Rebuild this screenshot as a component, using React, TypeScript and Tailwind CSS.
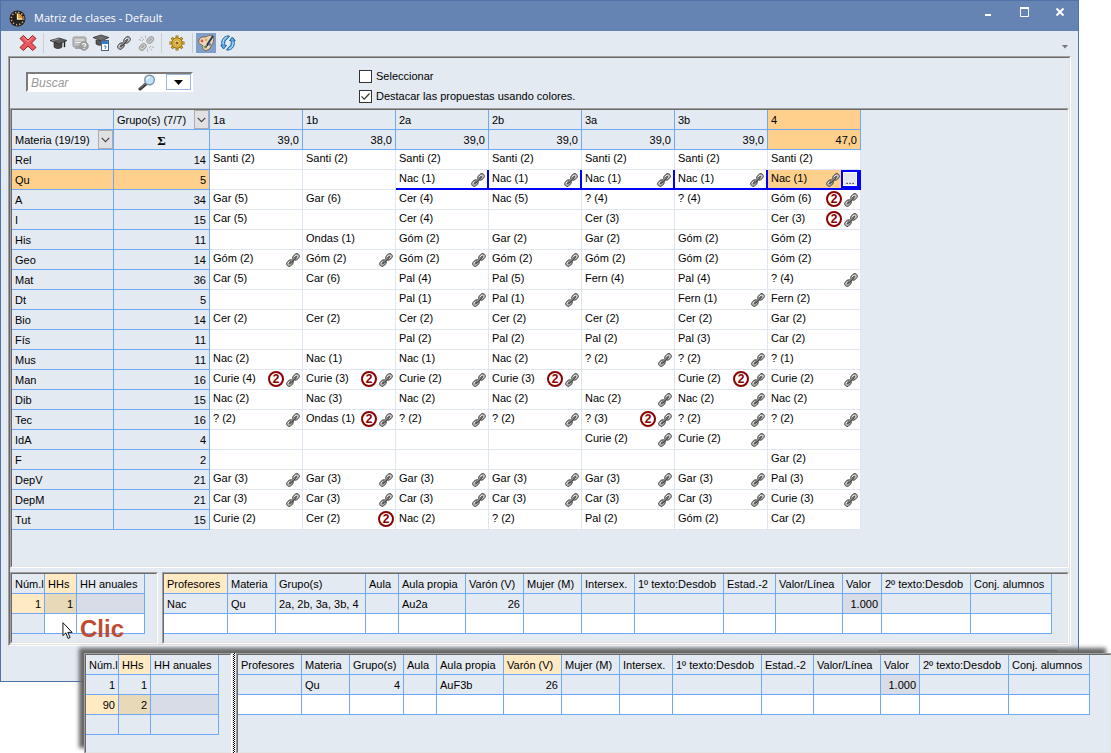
import type { ReactNode } from 'react';

import clsx from 'clsx';

const GROUPS = [
    { name: '1a', total: '39,0' },
    { name: '1b', total: '38,0' },
    { name: '2a', total: '39,0' },
    { name: '2b', total: '39,0' },
    { name: '3a', total: '39,0' },
    { name: '3b', total: '39,0' },
    { name: '4', total: '47,0' },
];

// after the bar: b = second coupling badge, l = link icon
const SUBJECTS: [string, number, string[]][] = [
    ['Rel', 14, ['Santi (2)', 'Santi (2)', 'Santi (2)', 'Santi (2)', 'Santi (2)', 'Santi (2)', 'Santi (2)']],
    ['Qu', 5, ['', '', 'Nac (1)|l', 'Nac (1)|l', 'Nac (1)|l', 'Nac (1)|l', 'Nac (1)|l']],
    ['A', 34, ['Gar (5)', 'Gar (6)', 'Cer (4)', 'Nac (5)', '? (4)', '? (4)', 'Góm (6)|bl']],
    ['I', 15, ['Car (5)', '', 'Cer (4)', '', 'Cer (3)', '', 'Cer (3)|bl']],
    ['His', 11, ['', 'Ondas (1)', 'Góm (2)', 'Gar (2)', 'Gar (2)', 'Góm (2)', 'Góm (2)']],
    ['Geo', 14, ['Góm (2)|l', 'Góm (2)|l', 'Góm (2)|l', 'Góm (2)|l', 'Góm (2)', 'Góm (2)', 'Góm (2)']],
    ['Mat', 36, ['Car (5)', 'Car (6)', 'Pal (4)', 'Pal (5)', 'Fern (4)', 'Pal (4)', '? (4)|l']],
    ['Dt', 5, ['', '', 'Pal (1)|l', 'Pal (1)|l', '', 'Fern (1)|l', 'Fern (2)']],
    ['Bio', 14, ['Cer (2)', 'Cer (2)', 'Cer (2)', 'Cer (2)', 'Cer (2)', 'Cer (2)', 'Gar (2)']],
    ['Fís', 11, ['', '', 'Pal (2)', 'Pal (2)', 'Pal (2)', 'Pal (3)', 'Car (2)']],
    ['Mus', 11, ['Nac (2)', 'Nac (1)', 'Nac (1)', 'Nac (2)', '? (2)|l', '? (2)|l', '? (1)']],
    ['Man', 16, ['Curie (4)|bl', 'Curie (3)|bl', 'Curie (2)|l', 'Curie (3)|bl', '', 'Curie (2)|bl', 'Curie (2)|l']],
    ['Dib', 15, ['Nac (2)', 'Nac (3)', 'Nac (2)', 'Nac (2)', 'Nac (2)|l', 'Nac (2)|l', 'Nac (2)']],
    ['Tec', 16, ['? (2)|l', 'Ondas (1)|bl', '? (2)|l', '? (2)|l', '? (3)|bl', '? (2)|l', '? (2)|l']],
    ['IdA', 4, ['', '', '', '', 'Curie (2)|l', 'Curie (2)|l', '']],
    ['F', 2, ['', '', '', '', '', '', 'Gar (2)']],
    ['DepV', 21, ['Gar (3)|l', 'Gar (3)|l', 'Gar (3)|l', 'Gar (3)|l', 'Gar (3)|l', 'Gar (3)|l', 'Pal (3)|l']],
    ['DepM', 21, ['Car (3)|l', 'Car (3)|l', 'Car (3)|l', 'Car (3)|l', 'Car (3)|l', 'Car (3)|l', 'Curie (3)|l']],
    ['Tut', 15, ['Curie (2)', 'Cer (2)|b', 'Nac (2)', '? (2)', 'Pal (2)', 'Góm (2)', 'Car (2)']],
];

const CELL = 'h-5 border-r border-b border-[#6ea8f7] font-normal whitespace-nowrap overflow-hidden';
const HEAD = clsx(CELL, 'p-0 pt-[2px] px-[3px] leading-[17px]');
const FILTER_HEAD = clsx(CELL, 'p-0 pl-[3px]');

type Column = { name: string; width: string; active?: boolean };
type Cell = { text?: string; right?: boolean; bg?: string };

const HOURS_COLUMNS: Column[] = [
    { name: 'Núm.l', width: 'w-[33px]' },
    { name: 'HHs', width: 'w-8', active: true },
    { name: 'HH anuales', width: 'w-[68px]' },
];

const lessonColumns = (groupWidth: string, active: string): Column[] =>
    [
        { name: 'Profesores', width: 'w-16' },
        { name: 'Materia', width: 'w-12' },
        { name: 'Grupo(s)', width: groupWidth },
        { name: 'Aula', width: 'w-[33px]' },
        { name: 'Aula propia', width: 'w-[67px]' },
        { name: 'Varón (V)', width: 'w-[58px]' },
        { name: 'Mujer (M)', width: 'w-[58px]' },
        { name: 'Intersex.', width: 'w-[53px]' },
        { name: '1º texto:Desdob', width: 'w-[89px]' },
        { name: 'Estad.-2', width: 'w-[52px]' },
        { name: 'Valor/Línea', width: 'w-[67px]' },
        { name: 'Valor', width: 'w-[39px]' },
        { name: '2º texto:Desdob', width: 'w-[89px]' },
        { name: 'Conj. alumnos', width: 'w-[81px]' },
    ].map(column => ({ ...column, active: column.name === active }));

const lessonRow = (teacher: string, groups: Cell, room: string): Cell[] => [
    { text: teacher },
    { text: 'Qu' },
    groups,
    {},
    { text: room },
    { text: '26', right: true },
    {},
    {},
    {},
    {},
    {},
    { text: '1.000', right: true, bg: 'bg-[#d7dce6]' },
    {},
    {},
];

const EMPTY_LESSON: Cell[] = Array.from({ length: 14 }, () => ({ bg: 'bg-white' }));

const ClockIcon = () => (
    <svg width="17" height="17" viewBox="0 0 17 17" aria-hidden="true">
        <circle cx="8.500" cy="8.500" r="8" fill="#24201e" />
        <circle cx="8.500" cy="8.500" r="6.200" fill="none" stroke="#d8b07a" strokeWidth="1.500" strokeDasharray="1.300 1.950" />
        <path d="M8.500 3.500A5 5 0 0 1 13.500 8.500H8.500Z" fill="#e8952c" />
        <path d="M8.500 3.500v5.500h5" fill="none" stroke="#fff0b0" strokeWidth="1.300" />
    </svg>
);

const DeleteIcon = () => (
    <svg width="18" height="18" viewBox="0 0 18 18" aria-hidden="true">
        <path d="M4.500 1.500 9 6l4.500-4.500L17 4.500 12.500 9l4.500 4.500-3.500 3L9 12l-4.500 4.500L1 13.500 5.500 9 1 4.500Z" fill="#e8585c" stroke="#a81c24" strokeLinejoin="round" />
        <path d="M4.500 3.200 9 7.700l4.500-4.500" fill="none" stroke="#ff9a98" />
    </svg>
);

const CapIcon = () => (
    <svg width="17" height="16" viewBox="0 0 17 16" aria-hidden="true">
        <path d="M4 7v5c2 2 6 2 8 0V7" fill="#4a4a4a" stroke="#222" strokeWidth=".6" />
        <path d="M0 5.500 9 3l8 2.500L9 9Z" fill="#5d5d5d" stroke="#262626" strokeWidth=".7" />
        <path d="m2 5.600 7-1.800" stroke="#aaa" strokeWidth=".8" />
        <path d="M14.500 6.200v6" stroke="#222" strokeWidth="1.400" />
    </svg>
);

const LessonQueryIcon = () => (
    <svg width="17" height="16" viewBox="0 0 17 16" aria-hidden="true">
        <rect x="1" y="2" width="13" height="10" rx="1.500" fill="#bcbcbc" stroke="#999" />
        <path d="M3 5h9M3 7.500h6" stroke="#eee" />
        <rect x="3" y="11" width="7" height="3" fill="#a4a4a4" />
        <circle cx="12" cy="11" r="4.300" fill="#a2a2a2" stroke="#8a8a8a" strokeWidth=".7" />
        <path d="M10.600 10c0-2 3-2 3 0 0 1-1.400 1-1.400 2m0 1v1" fill="none" stroke="#fff" strokeWidth="1.100" />
    </svg>
);

const CapCalendarIcon = () => (
    <svg width="18" height="18" viewBox="0 0 18 18" aria-hidden="true">
        <path d="M3 6v4c2 1.500 4 1.500 6 1V6" fill="#555" stroke="#222" strokeWidth=".6" />
        <path d="M0 3.500 8 1l8 2.500L8 7Z" fill="#6c6c6c" stroke="#262626" strokeWidth=".7" />
        <rect x="8.500" y="6.500" width="7" height="10" fill="#fff" stroke="#56606c" />
        <path d="M9 7h6v3H9z" fill="#2f80d0" />
        <path d="M11 12h2v1l-1 2" fill="none" stroke="#2f80d0" />
    </svg>
);

const LinkIcon = () => (
    <svg width="14" height="14" viewBox="0 0 14 14" aria-hidden="true" className="shrink-0">
        <g transform="rotate(-45 7 7)">
            <rect x="-.8" y="4.500" width="7" height="5" rx="2.500" fill="#b4b4b4" stroke="#565656" />
            <rect x="7.800" y="4.500" width="7" height="5" rx="2.500" fill="#cacaca" stroke="#565656" />
            <path d="M2.500 7h3M8.500 7h3" stroke="#555" strokeWidth="2" strokeLinecap="round" />
            <path d="M4 7h6" stroke="#484848" strokeWidth="2.600" />
            <path d="M4 6.600h6" stroke="#c4c4c4" strokeWidth=".9" />
            <path d="M.8 5.700h2.600M9.600 5.700h3" stroke="#f4f4f4" strokeWidth=".9" />
        </g>
    </svg>
);

const UnlinkIcon = () => (
    <svg width="17" height="17" viewBox="0 0 17 17" aria-hidden="true">
        <g fill="#ccc" stroke="#9c9c9c">
            <rect x="1" y="9.500" width="7.500" height="5" rx="2.500" transform="rotate(-45 4.750 12)" />
            <rect x="8.500" y="2.500" width="7.500" height="5" rx="2.500" transform="rotate(-45 12.250 5)" />
        </g>
        <path d="M3.500 12.800 6 10.500M11 6l2.500-2.300" stroke="#999" strokeWidth="1.200" />
        <path d="M1 4.500 5 6M3 1.500 6 5M7.500.5V4M16 12.500 12 11M14 15.500 11 12M9.500 16.500V13" stroke="#aaa" strokeDasharray="2 1" />
    </svg>
);

const GearIcon = () => (
    <svg width="16" height="16" viewBox="0 0 16 16" aria-hidden="true">
        <path d="M8 .5v15M.5 8h15M2.700 2.700l10.600 10.600M13.300 2.700 2.700 13.300" stroke="#8a6412" strokeWidth="2.800" />
        <path d="M8 1v14M1 8h14M3 3l10 10M13 3 3 13" stroke="#e0ae30" strokeWidth="1.400" />
        <circle cx="8" cy="8" r="5.200" fill="#e8bd48" stroke="#94700f" />
        <circle cx="8" cy="8" r="3.200" fill="#f7dc82" stroke="#b08420" strokeWidth=".8" />
        <circle cx="8" cy="8" r="1.600" fill="#8a6412" />
    </svg>
);

const PaletteIcon = () => (
    <svg width="18" height="18" viewBox="0 0 18 18" aria-hidden="true">
        <path d="M2 6C3 3 6 3 8 3s5-3 8-1c2 3 0 8-3 12-2 3-6 3-7 1s1-3-1-4-4-2-3-5Z" fill="#ecd8b8" stroke="#7d6248" />
        <circle cx="5" cy="7" r="1.400" fill="#c7594e" />
        <circle cx="9" cy="5.800" r="1.400" fill="#dfa95a" />
        <circle cx="8.500" cy="13" r="1.400" fill="#5a9b59" />
        <circle cx="12.800" cy="10.500" r="1.300" fill="#4f7cb4" />
        <path d="M16 2 10 11" stroke="#263a52" strokeWidth="2" />
        <path d="M10.500 10 8 14l3.500-2.800Z" fill="#3a2c22" />
    </svg>
);

const RefreshIcon = () => (
    <svg width="16" height="16" viewBox="0 0 16 16" aria-hidden="true">
        <g fill="#5ba9e4" stroke="#1b5b9d" strokeWidth=".9" strokeLinejoin="round">
            <path d="M.8 10.500H2C.8 6 3 2 7 1h2.500l-2 2.700C5 4.800 4.200 7.500 5 10.500h1.500L3.700 14Z" />
            <path d="M15.200 5.500H14C15.200 10 13 14 9 15H6.500l2-2.700c2.500-1.100 3.300-3.800 2.500-6.800H9.500L12.300 2Z" />
        </g>
        <path d="M3 9C2.600 6 4.200 3 7 2M13 7c.4 3-1.200 6-4 7" fill="none" stroke="#c4e6ff" />
    </svg>
);

const SearchIcon = () => (
    <svg width="18" height="17" viewBox="0 0 18 17" aria-hidden="true">
        <path d="m2 15 6.500-5.500" stroke="#3b3b3b" strokeWidth="3" strokeLinecap="round" />
        <path d="m2 14.300 5-4.300" stroke="#999" strokeWidth=".8" strokeLinecap="round" />
        <circle cx="11.500" cy="6" r="4.800" fill="#bfe2f7" stroke="#7d95a8" strokeWidth="1.400" />
        <path d="M8.800 5.500c.4-1.500 1.600-2.400 3-2.400" fill="none" stroke="#fff" strokeWidth="1.300" />
    </svg>
);

const ChevronButton = ({ label }: { label: string }) => (
    <button type="button" aria-label={label} className="flex h-[19px] w-[15px] shrink-0 items-center justify-center border border-[#adadad] bg-[#e1e1e1]">
        <svg width="9" height="6" viewBox="0 0 9 6" aria-hidden="true">
            <path d="m.7.800 3.800 3.800L8.300.800" fill="none" stroke="#444" strokeWidth="1.200" />
        </svg>
    </button>
);

// Two pixel sunken bevel
const Sunken = ({ className, children }: { className?: string; children: ReactNode }) => (
    <div className={clsx('flex flex-col border border-t-[#a0a0a0] border-r-white border-b-white border-l-[#a0a0a0]', className)}>
        <div className="flex min-w-0 flex-1 flex-col overflow-hidden border border-t-[#696969] border-r-[#e3e3e3] border-b-[#e3e3e3] border-l-[#696969]">
            {children}
        </div>
    </div>
);

const ToolButton = ({ label, active, children }: { label: string; active?: boolean; children: ReactNode }) => (
    <button
        type="button"
        aria-label={label}
        aria-pressed={active}
        className={clsx('flex h-5 w-5 items-center justify-center', active && 'bg-[#7f9fc9]')}
    >
        {children}
    </button>
);

const Separator = () => <span className="h-5 w-px bg-[#c9ced6]" />;

const Badge = () => (
    <span className="mt-px mr-px flex size-4 shrink-0 items-center justify-center rounded-full border-2 border-[#8b0000] bg-white text-xs leading-3 font-bold text-[#8b0000]">
        2
    </span>
);

const MatrixCell = ({ value, coupled, selected }: { value: string; coupled: boolean; selected: boolean }) => {
    const [text, flags = ''] = value.split('|');

    return (
        <td
            className={clsx(
                'h-5 p-0 align-top',
                coupled ? 'border-r-2 border-b-2 border-[#0000ff]' : 'border-r border-b border-[#e0e6f1]',
                selected ? 'bg-[#ffd08b]' : 'bg-white'
            )}
        >
            <div className="flex h-[18px] items-start gap-px pl-[3px]">
                <span className="flex-1 leading-[17px]">{text}</span>
                {flags.includes('b') && <Badge />}
                {flags.includes('l') && (
                    <span className={clsx('pt-[3px]', !selected && 'pr-[2px]')}>
                        <LinkIcon />
                    </span>
                )}
                {selected && (
                    <button type="button" aria-label="Más" className="flex h-[18px] w-[18px] items-end justify-center border-2 border-[#0000ff] bg-[#e4e7ec] leading-3 outline outline-1 -outline-offset-3 outline-white">
                        ...
                    </button>
                )}
            </div>
        </td>
    );
};

const Matrix = () => (
    <table className="w-[849px] table-fixed border-separate border-spacing-0">
        <thead>
            <tr>
                <th className={clsx(HEAD, 'w-[102px]')} />
                <th className={clsx(FILTER_HEAD, 'w-24')}>
                    <div className="flex items-center justify-between">
                        <span className="pt-px leading-[18px]">Grupo(s) (7/7)</span>
                        <ChevronButton label="Filtrar grupos" />
                    </div>
                </th>
                {GROUPS.map(({ name }) => (
                    <th key={name} className={clsx(HEAD, 'w-[93px] text-left', name === '4' && 'bg-[#ffd08b]')}>
                        {name}
                    </th>
                ))}
            </tr>
            <tr>
                <th className={FILTER_HEAD}>
                    <div className="flex items-center justify-between">
                        <span className="pt-px leading-[18px]">Materia (19/19)</span>
                        <ChevronButton label="Filtrar materias" />
                    </div>
                </th>
                <th className={HEAD}>
                    <span className="block font-['Liberation_Serif',serif] text-[13px] leading-[15px] font-bold">Σ</span>
                </th>
                {GROUPS.map(({ name, total }) => (
                    <th key={name} className={clsx(HEAD, 'text-right', name === '4' && 'bg-[#ffd08b]')}>
                        {total}
                    </th>
                ))}
            </tr>
        </thead>
        <tbody>
            {SUBJECTS.map(([name, hours, cells]) => (
                <tr key={name}>
                    <th className={clsx(HEAD, 'text-left', name === 'Qu' && 'bg-[#ffd08b]')}>{name}</th>
                    <td className={clsx(HEAD, 'text-right', name === 'Qu' && 'bg-[#ffd08b]')}>{hours}</td>
                    {cells.map((value, i) => (
                        <MatrixCell
                            key={GROUPS[i].name}
                            value={value}
                            coupled={name === 'Qu' && i > 1}
                            selected={name === 'Qu' && i === 6}
                        />
                    ))}
                </tr>
            ))}
        </tbody>
    </table>
);

const DetailTable = ({ columns, rows }: { columns: Column[]; rows: Cell[][] }) => (
    <table className="w-px table-fixed border-separate border-spacing-0">
        <thead>
            <tr>
                {columns.map(({ name, width, active }) => (
                    <th key={name} className={clsx(HEAD, 'text-left', width, active && 'bg-[#ffeac3]')}>
                        {name}
                    </th>
                ))}
            </tr>
        </thead>
        <tbody>
            {rows.map((row, i) => (
                <tr key={i}>
                    {row.map(({ text, right, bg }, j) => (
                        <td key={j} className={clsx(HEAD, right && 'text-right', bg)}>
                            {text}
                        </td>
                    ))}
                </tr>
            ))}
        </tbody>
    </table>
);

const TitleBar = () => (
    <header className="flex h-[30px] items-start bg-[#6583b3] text-white">
        <div className="flex flex-1 items-center gap-2 pt-[7px] pl-2">
            <ClockIcon />
            <h1 className="font-['Open_Sans',sans-serif] text-[11px] leading-5">Matriz de clases - Default</h1>
        </div>
        <button type="button" aria-label="Minimizar" className="flex h-[22px] w-9 items-center justify-center">
            <svg width="10" height="10" viewBox="0 0 10 10" aria-hidden="true">
                <path d="M2 8h6" stroke="#fff" strokeWidth="2" />
            </svg>
        </button>
        <button type="button" aria-label="Maximizar" className="flex h-[22px] w-9 items-center justify-center">
            <svg width="10" height="10" viewBox="0 0 10 10" aria-hidden="true">
                <path d="M1.500 1v8.500h8V1" fill="none" stroke="#fff" />
                <path d="M1 1h9" stroke="#fff" strokeWidth="2" />
            </svg>
        </button>
        <button type="button" aria-label="Cerrar" className="flex h-[22px] w-9 items-center justify-center">
            <svg width="10" height="10" viewBox="0 0 10 10" aria-hidden="true">
                <path d="m1.500 1.500 7 7m0-7-7 7" stroke="#fff" strokeWidth="2" />
            </svg>
        </button>
    </header>
);

const Toolbar = () => (
    <div className="flex h-[25px] items-center pr-[10px] pb-px pl-[17px]">
        <div className="flex flex-1 items-center gap-[2px]">
            <span className="pr-[3px]">
                <ToolButton label="Borrar">
                    <DeleteIcon />
                </ToolButton>
            </span>
            <Separator />
            <span className="flex items-center gap-[2px] pr-[3px] pl-[2px]">
                <ToolButton label="Clase">
                    <CapIcon />
                </ToolButton>
                <ToolButton label="Consultar clase">
                    <LessonQueryIcon />
                </ToolButton>
                <ToolButton label="Horario de clase">
                    <CapCalendarIcon />
                </ToolButton>
                <ToolButton label="Acoplar">
                    <LinkIcon />
                </ToolButton>
                <ToolButton label="Desacoplar">
                    <UnlinkIcon />
                </ToolButton>
            </span>
            <Separator />
            <span className="px-[3px]">
                <ToolButton label="Ajustes">
                    <GearIcon />
                </ToolButton>
            </span>
            <Separator />
            <span className="flex items-center gap-[2px] pl-px">
                <ToolButton label="Colores" active>
                    <PaletteIcon />
                </ToolButton>
                <ToolButton label="Actualizar">
                    <RefreshIcon />
                </ToolButton>
            </span>
        </div>
        <button type="button" aria-label="Más opciones" className="pt-2">
            <svg width="6" height="4" viewBox="0 0 6 4" aria-hidden="true">
                <path d="M0 0h6L3 3.500Z" fill="#777" />
            </svg>
        </button>
    </div>
);

const Option = ({ label, checked }: { label: string; checked?: boolean }) => (
    <label className="flex h-5 items-center gap-1">
        <span className="relative flex size-[13px]">
            <input type="checkbox" defaultChecked={checked} className="peer size-[13px] appearance-none border border-[#333] bg-white" />
            <svg width="13" height="13" viewBox="0 0 13 13" aria-hidden="true" className="pointer-events-none absolute inset-0 hidden peer-checked:block">
                <path d="m2.500 6.300 2.700 2.900L10.500 3.500" fill="none" stroke="#333" strokeWidth="1.200" />
            </svg>
        </span>
        {label}
    </label>
);

const Filters = () => (
    <div className="flex h-[50px] items-start pl-4">
        <div className="mt-[14px] flex h-5 w-[167px] border-2 border-t-[#7b7b7b] border-r-white border-b-white border-l-[#7b7b7b] bg-white">
            <input type="search" aria-label="Buscar" placeholder="Buscar" className="w-0 flex-1 px-[3px] pt-px text-xs italic outline-none placeholder:text-[#999]" />
            <button type="button" aria-label="Iniciar búsqueda" className="pr-[10px]">
                <SearchIcon />
            </button>
            <button type="button" aria-label="Opciones de búsqueda" className="flex w-[25px] items-center justify-center border border-[#9fb6dc] pt-px">
                <svg width="9" height="5" viewBox="0 0 9 5" aria-hidden="true">
                    <path d="M0 0h9L4.500 5Z" fill="#000" />
                </svg>
            </button>
        </div>
        <div className="flex flex-col pt-2 pl-[166px]">
            <Option label="Seleccionar" />
            <Option label="Destacar las propuestas usando colores." checked />
        </div>
    </div>
);

const ClickHint = () => (
    <div className="pointer-events-none absolute top-[47px] left-[52px] flex items-start gap-[6px]">
        <svg width="12" height="20" viewBox="0 0 13 20" aria-hidden="true" className="mt-1.5">
            <path d="M1 1v14l3.200-3 2.300 6 2.300-1-2.500-5.500H11Z" fill="#fff" stroke="#000" />
        </svg>
        <span className="text-2xl leading-7 font-bold text-[#c04a30]">Clic</span>
    </div>
);

const MatrixWindow = () => (
    <section className="mr-8 border border-[#4f73a9] bg-[#e3eaf2]">
        <TitleBar />
        <Toolbar />
        <div className="px-[7px] pb-[35px]">
            <Sunken>
                <Filters />
                <Sunken>
                    <div className="min-h-[456px]">
                        <Matrix />
                    </div>
                </Sunken>
                <div className="relative flex gap-1 pt-1">
                    <Sunken className="w-[148px] shrink-0">
                        <div className="min-h-[68px]">
                            <DetailTable
                                columns={HOURS_COLUMNS}
                                rows={[
                                    [
                                        { text: '1', right: true, bg: 'bg-[#ffeac3]' },
                                        { text: '1', right: true, bg: 'bg-[#e8d9b9]' },
                                        { bg: 'bg-[#d7dce6]' },
                                    ],
                                    [{}, { bg: 'bg-white' }, { bg: 'bg-white' }],
                                ]}
                            />
                        </div>
                    </Sunken>
                    <Sunken className="min-w-0 flex-1">
                        <DetailTable
                            columns={lessonColumns('w-[90px]', 'Profesores')}
                            rows={[lessonRow('Nac', { text: '2a, 2b, 3a, 3b, 4' }, 'Au2a'), EMPTY_LESSON]}
                        />
                    </Sunken>
                    <ClickHint />
                </div>
            </Sunken>
            <div className="mt-1 mr-[14px] -mb-6 ml-auto h-5 w-[178px] border border-[#333]" />
        </div>
    </section>
);

const LessonWindow = () => (
    <section className="relative -mt-[29px] ml-[84px] flex flex-1 bg-[#e3eaf2] shadow-[-5px_-5px_4px_#666]">
        <Sunken className="w-[148px] shrink-0 border-b-0">
            <DetailTable
                columns={HOURS_COLUMNS}
                rows={[
                    [{ text: '1', right: true }, { text: '1', right: true }, {}],
                    [
                        { text: '90', right: true, bg: 'bg-[#ffeac3]' },
                        { text: '2', right: true, bg: 'bg-[#e8d9b9]' },
                        { bg: 'bg-[#d7dce6]' },
                    ],
                    [{}, {}, {}],
                ]}
            />
        </Sunken>
        <div className="mx-px w-[2px] bg-[repeating-conic-gradient(#000_0_25%,#fff_0_50%)] bg-[length:2px_2px]" />
        <Sunken className="min-w-0 flex-1 border-r-0 border-b-0">
            <DetailTable
                columns={lessonColumns('w-[54px]', 'Varón (V)')}
                rows={[lessonRow('', { text: '4', right: true }, 'AuF3b'), EMPTY_LESSON]}
            />
        </Sunken>
    </section>
);

const App = () => (
    <main className="flex min-h-screen flex-col overflow-hidden bg-white font-['Liberation_Sans',Arial,sans-serif] text-[11px] leading-[19px] text-black">
        <MatrixWindow />
        <LessonWindow />
    </main>
);

export default App;
